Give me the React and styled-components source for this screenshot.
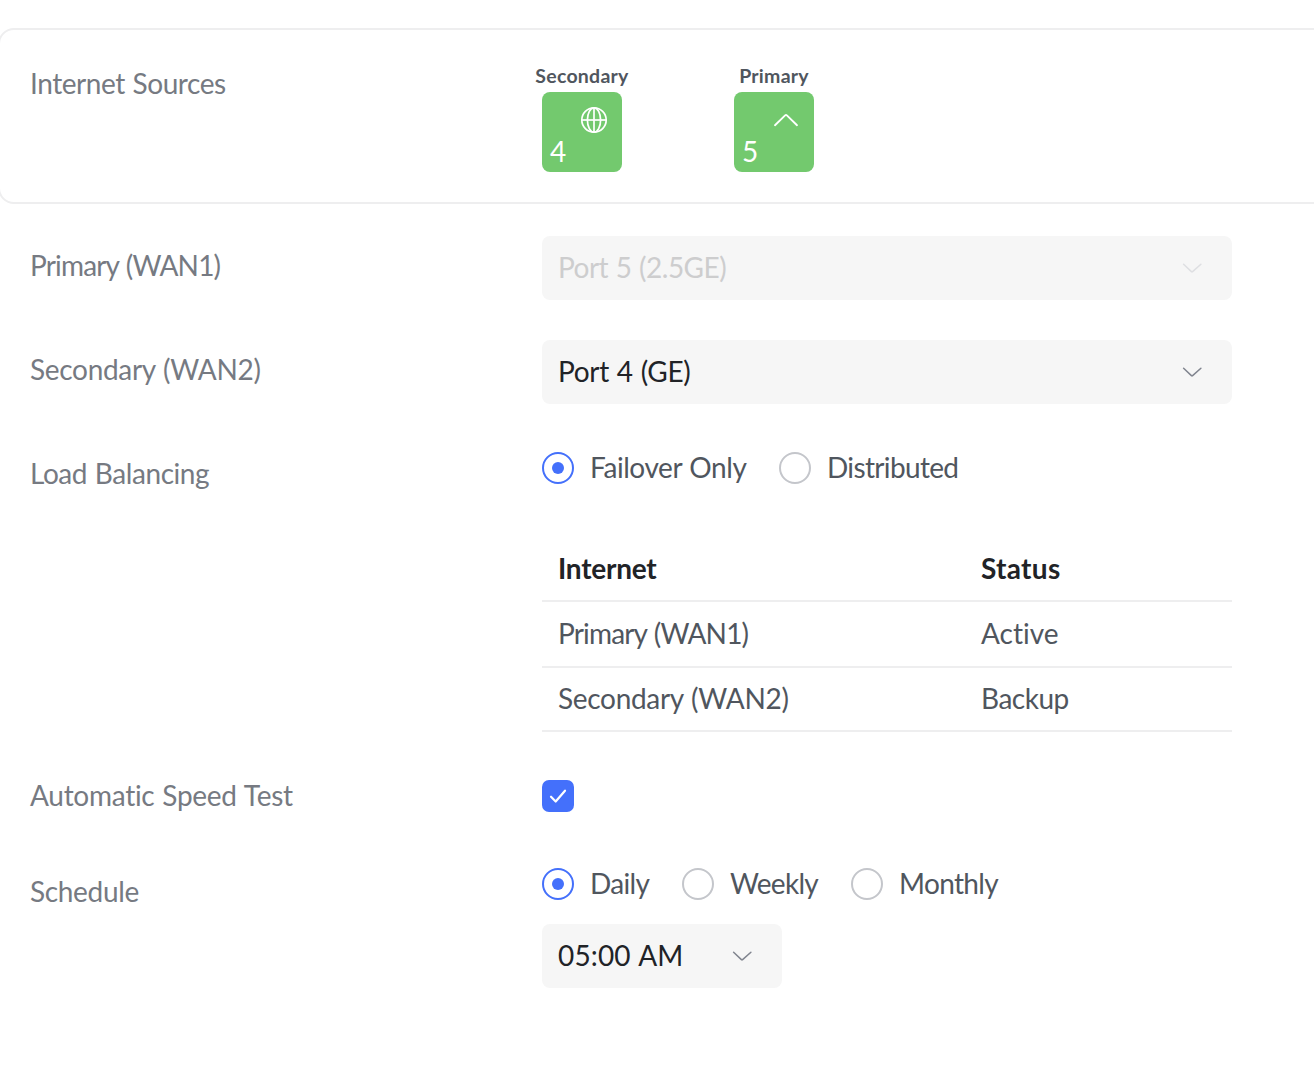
import React from "react";
import styled, { createGlobalStyle, css } from "styled-components";

const GlobalStyle = createGlobalStyle`
  *, *::before, *::after { box-sizing: border-box; }
  body {
    margin: 0;
    background: #fff;
    overflow: hidden;
    font-family: Lato, "Open Sans", sans-serif;
    font-size: 28px;
    line-height: 30px;
    font-variant-ligatures: none;
  }
`;

const Page = styled.main`
  width: 1314px;
  height: 1066px;
  padding-top: 28px;
  overflow: hidden;
`;

const SourcesCard = styled.section`
  display: grid;
  grid-template-columns: 512px 1fr;
  width: 1340px;
  height: 176px;
  margin-left: -2px;
  padding-left: 30px;
  border: 2px solid #eeeeef;
  border-radius: 16px;
`;

const Form = styled.section`
  display: flex;
  flex-direction: column;
  padding: 32px 0 0 30px;
`;

const Row = styled.div`
  display: grid;
  grid-template-columns: 512px 690px;
  align-items: start;
  margin-bottom: ${(p) => p.$after || 0}px;
`;

const Text = styled.span`
  display: block;
  white-space: pre;
  letter-spacing: ${(p) => p.$track || 0}px;
  word-spacing: 1px;
  color: #50565e;
`;

const Label = styled(Text)`
  padding-top: ${(p) => p.$top}px;
  color: #767a82;
`;

const Ports = styled.div`
  display: flex;
  gap: 112px;
  padding-top: 33px;
`;

const Port = styled.div`
  display: flex;
  flex-direction: column;
  align-items: center;
  gap: 3px;
  width: 80px;
`;

const PortRole = styled.span`
  font-size: 19.5px;
  font-weight: 700;
  line-height: 26px;
  letter-spacing: 0.25px;
  color: #50565e;
`;

const PortTile = styled.div`
  display: flex;
  flex-direction: column;
  justify-content: space-between;
  width: 80px;
  height: 80px;
  padding: 14px 14px 6px 8px;
  border-radius: 8px;
  background: #73c96e;
  color: #fff;

  svg { align-self: flex-end; }
`;

const Select = styled.div`
  display: flex;
  align-items: center;
  justify-content: space-between;
  width: ${(p) => p.$width || 690}px;
  height: 64px;
  padding: 0 28px 0 16px;
  border-radius: 8px;
  background: #f6f6f6;
`;

const SelectValue = styled(Text)`
  padding-bottom: 2px;
  color: ${(p) => (p.$disabled ? "#cdcdce" : "#212327")};
`;

const RadioGroup = styled.div`
  display: flex;
  gap: 32px;
`;

const RadioItem = styled.label`
  display: flex;
  align-items: center;
  gap: 16px;
  height: 32px;
`;

const RadioDot = styled.span`
  flex: none;
  display: grid;
  place-items: center;
  width: 32px;
  height: 32px;
  border: 2px solid ${(p) => (p.$on ? "#4470fb" : "#c4c6cb")};
  border-radius: 50%;

  ${(p) => p.$on && css`
    &::after {
      content: "";
      width: 12px;
      height: 12px;
      border-radius: 50%;
      background: #4470fb;
    }
  `}
`;

const RadioText = styled(Text)`
  width: ${(p) => p.$width}px;
  padding-bottom: 2px;
`;

const Table = styled.div`
  margin-top: 52px;
`;

const TableRow = styled.div`
  display: grid;
  grid-template-columns: 423px 1fr;
  height: ${(p) => p.$height}px;
  padding: ${(p) => p.$top}px 0 0 16px;
  border-bottom: 2px solid #eeeeef;
`;

const HeadText = styled(Text)`
  font-weight: 700;
  color: #212327;
`;

const Checkbox = styled.div`
  display: grid;
  place-items: center;
  width: 32px;
  height: 32px;
  border-radius: 7px;
  background: #4470fb;
`;

const Schedule = styled.div`
  display: flex;
  flex-direction: column;
  gap: 24px;
`;

const GlobeIcon = () => (
  <svg width="28" height="28" viewBox="0 0 28 28" fill="none" stroke="#fff" strokeWidth="1.7">
    <circle cx="14" cy="14" r="12.2" />
    <ellipse cx="14" cy="14" rx="6.6" ry="12.2" />
    <path d="M14 1.75v24.5" />
    <path d="M1.75 14h24.5" />
  </svg>
);

const ChevronUpIcon = () => (
  <svg width="28" height="28" viewBox="0 0 28 28" fill="none" stroke="#fff" strokeWidth="1.9" strokeLinecap="round">
    <path d="M3 19.2 13.1 9.4Q14 8.6 14.9 9.4L25 19.2" />
  </svg>
);

const ChevronDownIcon = ({ color = "#81858f" }) => (
  <svg width="24" height="24" viewBox="0 0 24 24" fill="none" stroke={color} strokeWidth="1.5" strokeLinecap="round">
    <path d="M3.6 8.2 11.4 15.6Q12 16.1 12.6 15.6L20.9 8.2" />
  </svg>
);

const CheckIcon = () => (
  <svg width="32" height="32" viewBox="0 0 32 32" fill="none" stroke="#fff" strokeWidth="2.2" strokeLinecap="round" strokeLinejoin="round">
    <path d="M9 16.7 13.7 21.5 23 10.7" />
  </svg>
);

const Radio = ({ on, children, track, width }) => (
  <RadioItem>
    <RadioDot $on={on} />
    <RadioText $track={track} $width={width}>{children}</RadioText>
  </RadioItem>
);

export default function App() {
  return (
    <Page>
      <GlobalStyle />
      <SourcesCard>
        <Label $top={38} $track={-0.44}>Internet Sources</Label>
        <Ports>
          <Port>
            <PortRole>Secondary</PortRole>
            <PortTile><GlobeIcon />4</PortTile>
          </Port>
          <Port>
            <PortRole>Primary</PortRole>
            <PortTile><ChevronUpIcon />5</PortTile>
          </Port>
        </Ports>
      </SourcesCard>
      <Form>
        <Row $after={40}>
          <Label $top={14} $track={-0.83}>Primary (WAN1)</Label>
          <Select>
            <SelectValue $disabled $track={-0.52}>Port 5 (2.5GE)</SelectValue>
            <ChevronDownIcon color="#dedfe2" />
          </Select>
        </Row>
        <Row $after={48}>
          <Label $top={14} $track={-0.31}>Secondary (WAN2)</Label>
          <Select>
            <SelectValue $track={-0.3}>Port 4 (GE)</SelectValue>
            <ChevronDownIcon />
          </Select>
        </Row>
        <Row $after={48}>
          <Label $top={6} $track={-0.43}>Load Balancing</Label>
          <div>
            <RadioGroup>
              <Radio on track={-0.43} width={157}>Failover Only</Radio>
              <Radio track={-0.65} width={132}>Distributed</Radio>
            </RadioGroup>
            <Table>
              <TableRow $height={66} $top={17}>
                <HeadText $track={-0.25}>Internet</HeadText>
                <HeadText $track={0.3}>Status</HeadText>
              </TableRow>
              <TableRow $height={66} $top={16}>
                <Text $track={-0.83}>Primary (WAN1)</Text>
                <Text $track={0}>Active</Text>
              </TableRow>
              <TableRow $height={64} $top={15}>
                <Text $track={-0.31}>Secondary (WAN2)</Text>
                <Text $track={-0.5}>Backup</Text>
              </TableRow>
            </Table>
          </div>
        </Row>
        <Row $after={56}>
          <Label $top={0} $track={-0.28}>Automatic Speed Test</Label>
          <Checkbox><CheckIcon /></Checkbox>
        </Row>
        <Row>
          <Label $top={8} $track={-0.33}>Schedule</Label>
          <Schedule>
            <RadioGroup>
              <Radio on track={-0.65} width={60}>Daily</Radio>
              <Radio track={-0.7} width={89}>Weekly</Radio>
              <Radio track={-0.65} width={100}>Monthly</Radio>
            </RadioGroup>
            <Select $width={240}>
              <SelectValue $track={0.16}>05:00 AM</SelectValue>
              <ChevronDownIcon />
            </Select>
          </Schedule>
        </Row>
      </Form>
    </Page>
  );
}
